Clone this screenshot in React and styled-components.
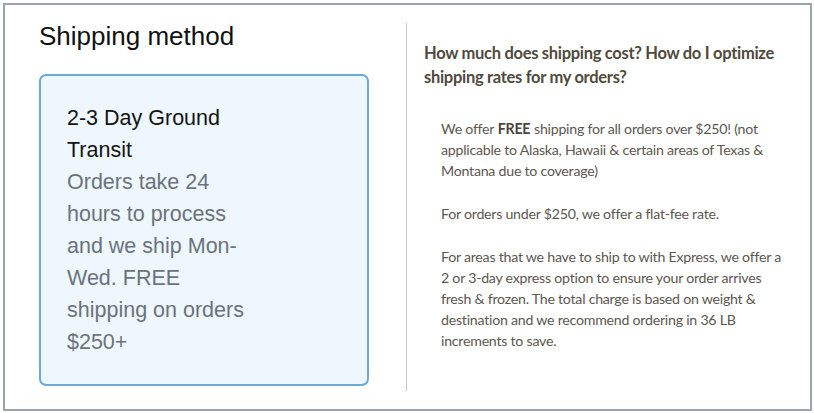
import React from "react";
import styled, { createGlobalStyle } from "styled-components";

const Global = createGlobalStyle`
  html, body { margin: 0; padding: 0; background: #ffffff; }
  * { box-sizing: border-box; }
`;

const Frame = styled.div`
  margin: 3px;
  width: 809px;
  height: 408px;
  border: 2px solid #98a4ae;
  display: flex;
  background: #ffffff;
`;

const LeftColumn = styled.section`
  width: 401px;
  padding: 16px 0 0 34px;
  display: flex;
  flex-direction: column;
  gap: 23px;
`;

const Title = styled.h1`
  margin: 0;
  font-family: "Liberation Sans", Arial, sans-serif;
  font-weight: 400;
  font-size: 26px;
  line-height: 30px;
  color: #111111;
`;

const MethodCard = styled.div`
  width: 330px;
  border: 2px solid #6aaad4;
  border-radius: 7px;
  background: #eef6fe;
  padding: 26px 26px;
`;

const MethodText = styled.div`
  width: 190px;
  font-family: "Liberation Sans", Arial, sans-serif;
  font-size: 21.5px;
  line-height: 32px;
`;

const MethodName = styled.div`
  color: #141414;
`;

const MethodDesc = styled.div`
  color: #6b737b;
`;

const Divider = styled.div`
  width: 1px;
  margin: 18px 0 18px;
  background: #c9c9c9;
`;

const RightColumn = styled.section`
  flex: 1;
  padding: 36px 24px 0 17px;
  font-family: Lato, "Open Sans", sans-serif;
`;

const Question = styled.h2`
  margin: 0 0 29px;
  font-size: 16.5px;
  letter-spacing: -0.3px;
  font-weight: 700;
  line-height: 24px;
  color: #4f4a3d;
`;

const Answer = styled.div`
  padding: 0 2px 0 17px;
  font-size: 14.2px;
  letter-spacing: -0.25px;
  line-height: 21px;
  color: #5c574f;
  display: flex;
  flex-direction: column;
  gap: 22px;
`;

const Para = styled.p`
  margin: 0;
`;

const Strong = styled.b`
  font-weight: 700;
  color: #4a453d;
  margin: 0 0.4px;
`;

export default function App() {
  return (
    <>
      <Global />
      <Frame>
        <LeftColumn>
          <Title>Shipping method</Title>
          <MethodCard>
            <MethodText>
              <MethodName>2-3 Day Ground Transit</MethodName>
              <MethodDesc>
                Orders take 24 hours to process and we ship Mon-Wed. FREE shipping on orders $250+
              </MethodDesc>
            </MethodText>
          </MethodCard>
        </LeftColumn>
        <Divider />
        <RightColumn>
          <Question>
            How much does shipping cost? How do I optimize shipping rates for my orders?
          </Question>
          <Answer>
            <Para>
              We offer <Strong>FREE</Strong> shipping for all orders over $250! (not applicable to
              Alaska, Hawaii &amp; certain areas of Texas &amp; Montana due to coverage)
            </Para>
            <Para>For orders under $250, we offer a flat-fee rate.</Para>
            <Para>
              For areas that we have to ship to with Express, we offer a 2 or 3-day express option
              to ensure your order arrives fresh &amp; frozen. The total charge is based on weight
              &amp; destination and we recommend ordering in 36 LB increments to save.
            </Para>
          </Answer>
        </RightColumn>
      </Frame>
    </>
  );
}
